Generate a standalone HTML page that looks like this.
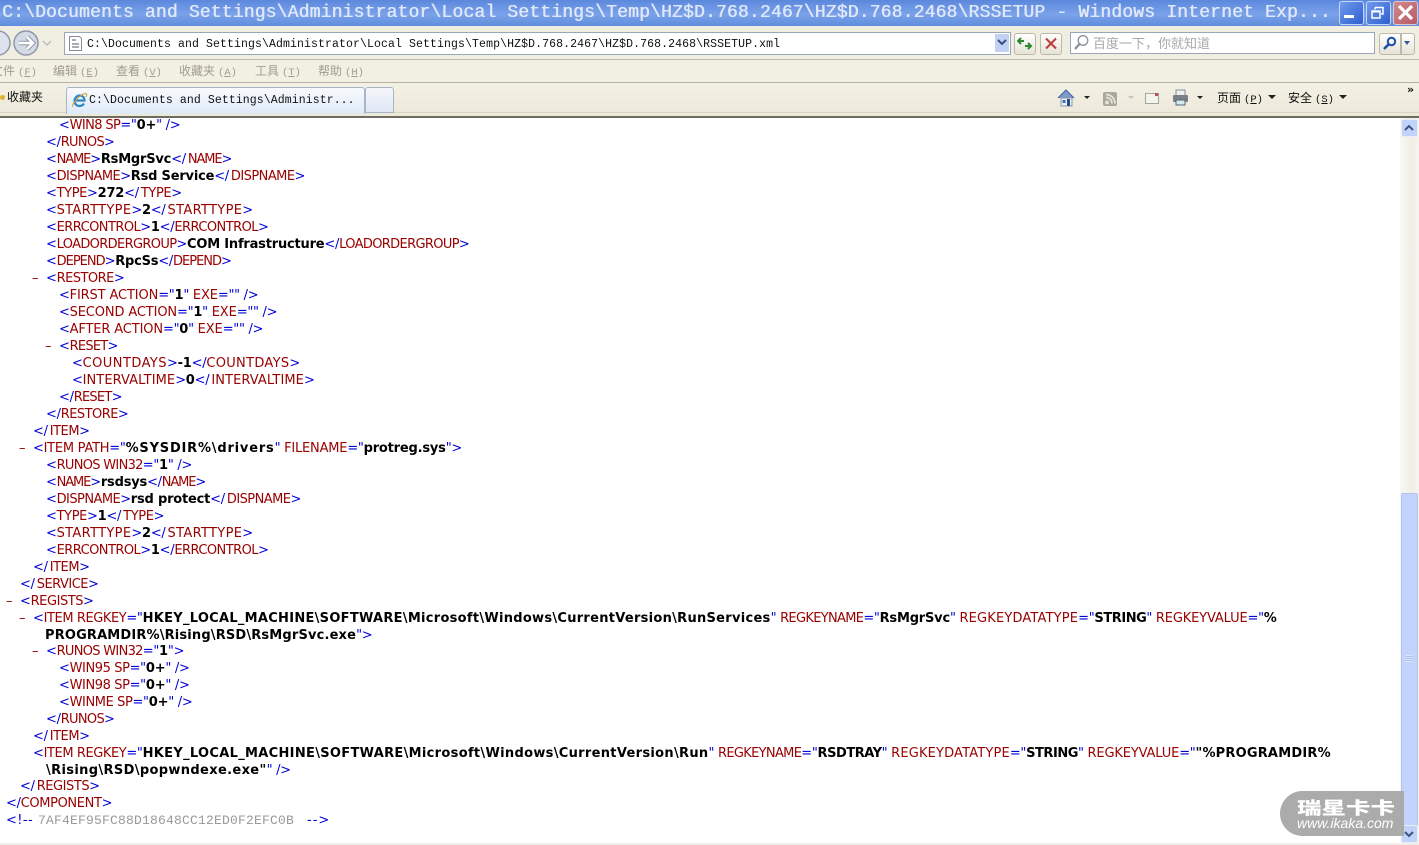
<!DOCTYPE html>
<html><head><meta charset="utf-8"><style>
html,body{margin:0;padding:0;width:1419px;height:845px;overflow:hidden;background:#fff}
.a{position:absolute}
#x{position:absolute;left:0;top:2px}
#x div{position:absolute;white-space:pre;font:13px/16px "DejaVu Sans",sans-serif;color:#0000d8;letter-spacing:-.3px}
#x b{color:#000;font-weight:bold;letter-spacing:-.2px}
#x b.p{letter-spacing:.8px}#x b.q{letter-spacing:.16px}#x b.r{letter-spacing:.35px}#x b.h{letter-spacing:.28px}#x b.h2{letter-spacing:.31px}#x b.g{letter-spacing:.2px}#x b.s{letter-spacing:-.45px}
#x em,#x i{font-style:normal;color:#990000;letter-spacing:-.5px}
#x i{margin-left:2px}
#x .st{letter-spacing:.33px}#x .ty{letter-spacing:-.38px}#x .na{letter-spacing:-1.1px}#x .di{letter-spacing:-.55px}#x .er{letter-spacing:-.55px}#x .lo{letter-spacing:-.65px}#x .de{letter-spacing:-1px}#x .re{letter-spacing:-.53px}#x .ru{letter-spacing:-.68px}#x .co{letter-spacing:.45px}#x .co2{letter-spacing:.3px}#x .in{letter-spacing:.08px}#x .rs{letter-spacing:-.75px}#x .it{letter-spacing:-.45px}#x .se{letter-spacing:-.5px}#x .rg{letter-spacing:-.45px}#x .cm{letter-spacing:-.37px}
#x .wi{letter-spacing:-.4px}#x .w8{letter-spacing:-.6px}#x .ac{letter-spacing:-.13px}#x .ex{letter-spacing:-.1px}#x .rw{letter-spacing:-.7px}#x .ip{letter-spacing:-.25px}#x .fn{letter-spacing:-.2px}#x .ir{letter-spacing:-.42px}#x .kn{letter-spacing:-.68px}#x .kd{letter-spacing:.16px}#x .kv{letter-spacing:-.15px}
.m{font:12px/14px "Noto Sans CJK SC",monospace;color:#a09d90;white-space:pre}
.m span,.k span{font:10.500px/14px "Liberation Mono",monospace;margin-left:3px}
.k{font:12px/15px "Noto Sans CJK SC",monospace;color:#111;white-space:pre}
.c{font-family:"Liberation Mono","Noto Sans CJK SC",monospace;white-space:pre}
</style></head><body>
<div class="a" style="left:0;top:0;width:1419px;height:26px;background:linear-gradient(#5c88dc,#7ba2ea 55%,#5f8ddc)"></div>
<div class="a c" style="left:2px;top:2px;font-size:18px;line-height:22px;letter-spacing:.18px;color:#dfe8f8;text-shadow:.5px 0 0 #dfe8f8">C:\Documents and Settings\Administrator\Local Settings\Temp\HZ$D.768.2467\HZ$D.768.2468\RSSETUP - Windows Internet Exp...</div>
<div class="a" style="left:1339px;top:1px;width:23px;height:22px;border-radius:3px;background:linear-gradient(135deg,#6f9aec,#2f5fd0);border:1px solid #c6d6f4"></div>
<div class="a" style="left:1344px;top:15px;width:10px;height:3px;background:#fff"></div>
<div class="a" style="left:1366px;top:1px;width:23px;height:22px;border-radius:3px;background:linear-gradient(135deg,#6f9aec,#2f5fd0);border:1px solid #c6d6f4"></div>
<svg class="a" style="left:1370px;top:4px" width="16" height="16" fill="none" stroke="#fff" stroke-width="1.5"><path d="M5 3.500h8v2M5 3.500v2M13 3v7h-2"/><rect x="2" y="7" width="8" height="7"/><path d="M2 7.500h8" stroke-width="2"/></svg>
<div class="a" style="left:1393px;top:1px;width:23px;height:22px;border-radius:3px;background:linear-gradient(135deg,#d08a8a,#b85a68);border:1px solid #dbc8d0"></div>
<svg class="a" style="left:1397px;top:4px" width="17" height="17" stroke="#fff" stroke-width="3.200"><path d="M2 2L15 15M15 2L2 15"/></svg>

<div class="a" style="left:0;top:26px;width:1419px;height:33px;background:#f0eee0"></div>
<div class="a" style="left:0;top:59px;width:1419px;height:1px;background:#bdbaa8"></div>
<div class="a" style="left:0;top:60px;width:1419px;height:22px;background:#f2f0e3"></div>
<div class="a" style="left:0;top:82px;width:1419px;height:1px;background:#b4b1a0"></div>
<div class="a" style="left:0;top:83px;width:1419px;height:33px;background:linear-gradient(#f3f1e5,#ece9d9)"></div>
<div class="a" style="left:0;top:112px;width:1419px;height:1px;background:#d8d5c5"></div>
<div class="a" style="left:0;top:116px;width:1419px;height:2px;background:#6e6c62"></div>

<svg class="a" style="left:-14px;top:28px" width="70" height="30"><circle cx="12" cy="15" r="12" fill="#dde3ee" stroke="#8f98aa" stroke-width="1.500"/><circle cx="40" cy="15" r="12" fill="#d4dae6" stroke="#8f98aa" stroke-width="1.500"/><path d="M33 15h13M41 9l6 6-6 6" fill="none" stroke="#8f98aa" stroke-width="4.500"/><path d="M33 15h13M41 9l6 6-6 6" fill="none" stroke="#fff" stroke-width="2.500"/><path d="M57 13l4 4 4-4" fill="none" stroke="#aab"/></svg>
<div class="a" style="left:64px;top:32px;width:945px;height:21px;background:#fff;border:1px solid #9aa7b8"></div>
<svg class="a" style="left:68px;top:36px" width="15" height="15"><path d="M1.500 .5h10l2 2v12h-12z" fill="#fff" stroke="#889"/><path d="M4 4h4M4 8h7M4 11h7" stroke="#556"/></svg>
<div class="a c" style="left:87px;top:37px;font-size:11.500px;line-height:15px;color:#111;letter-spacing:.1px">C:\Documents and Settings\Administrator\Local Settings\Temp\HZ$D.768.2467\HZ$D.768.2468\RSSETUP.xml</div>
<div class="a" style="left:995px;top:34px;width:14px;height:18px;background:#c3d2f4"></div>
<svg class="a" style="left:997px;top:39px" width="11" height="9" fill="none" stroke="#3a4f80" stroke-width="2"><path d="M1 1l4 4 4-4"/></svg>
<div class="a" style="left:1014px;top:33px;width:20px;height:20px;border:1px solid #bbb9a8;border-radius:3px;background:linear-gradient(#fff,#e5e3d6)"></div>
<svg class="a" style="left:1017px;top:36px" width="16" height="15" fill="none" stroke="#2b8a2b" stroke-width="2"><path d="M1 5h6M4 2L1 5l3 3M14 10H8M11 7l3 3-3 3"/></svg>
<div class="a" style="left:1040px;top:33px;width:20px;height:20px;border:1px solid #bbb9a8;border-radius:3px;background:linear-gradient(#fff,#e5e3d6)"></div>
<svg class="a" style="left:1044px;top:37px" width="14" height="13" stroke="#c43a3a" stroke-width="2"><path d="M2 1.500L12 11.500M12 1.500L2 11.500"/></svg>
<div class="a" style="left:1070px;top:32px;width:303px;height:20px;background:#fff;border:1px solid #9aa7b8"></div>
<svg class="a" style="left:1073px;top:34px" width="16" height="17" fill="none" stroke="#8a8f99" stroke-width="1.300"><circle cx="10" cy="6.500" r="4.800"/><path d="M6.500 10L2 15" stroke-width="2.200"/></svg>
<div class="a" style="left:1093px;top:35px;font:13px/16px 'Noto Sans CJK SC',sans-serif;color:#a8a8a8;white-space:pre">百度一下，你就知道</div>
<div class="a" style="left:1379px;top:33px;width:20px;height:20px;border:1px solid #bbb9a8;border-radius:3px 0 0 3px;background:linear-gradient(#fff,#e5e3d6)"></div>
<svg class="a" style="left:1382px;top:36px" width="16" height="15" fill="none" stroke="#1d4ea8" stroke-width="2"><circle cx="9.500" cy="5.500" r="3.700"/><path d="M6.500 8.500L2 13" stroke-width="2.600"/></svg>
<div class="a" style="left:1401px;top:33px;width:12px;height:20px;border:1px solid #bbb9a8;border-radius:0 3px 3px 0;background:linear-gradient(#fff,#e5e3d6)"></div>
<div class="a" style="left:1404px;top:41px;border:3px solid transparent;border-top:4px solid #3a5a90"></div>

<div class="a m" style="left:-9px;top:64px">文件<span>(<u>F</u>)</span></div>
<div class="a m" style="left:53px;top:64px">编辑<span>(<u>E</u>)</span></div>
<div class="a m" style="left:116px;top:64px">查看<span>(<u>V</u>)</span></div>
<div class="a m" style="left:179px;top:64px">收藏夹<span>(<u>A</u>)</span></div>
<div class="a m" style="left:255px;top:64px">工具<span>(<u>T</u>)</span></div>
<div class="a m" style="left:318px;top:64px">帮助<span>(<u>H</u>)</span></div>

<div class="a" style="left:0;top:95px;width:5px;height:5px;background:#e0b030;border-radius:50%"></div>
<div class="a" style="left:7px;top:89px;font:12px/16px 'Noto Sans CJK SC',sans-serif;color:#111">收藏夹</div>
<div class="a" style="left:66px;top:87px;width:297px;height:26px;border:1px solid #a9b4c6;border-bottom:0;border-radius:3px 3px 0 0;background:linear-gradient(#f8fafd,#dfeaf8)"></div>
<svg class="a" style="left:71px;top:92px" width="17" height="17" fill="none"><path d="M4 8.500h9.500C13.500 5 11 3.500 8.500 3.500S3.500 6 3.500 9s2.200 5 5 5c2 0 3.500-1 4.500-2.500" stroke="#2d86c9" stroke-width="2.200"/><path d="M1.500 15C1 12 8 3 14 1.500c2-.3 2 1.500 1 3.500" stroke="#d9a030" stroke-width="1.100"/></svg>
<div class="a c" style="left:89px;top:93px;font-size:11.500px;line-height:15px;color:#111;letter-spacing:.09px">C:\Documents and Settings\Administr...</div>
<div class="a" style="left:365px;top:87px;width:27px;height:24px;border:1px solid #a9b4c6;border-radius:3px 3px 0 0;background:linear-gradient(#f4f6fb,#dfe8f5)"></div>

<svg class="a" style="left:1057px;top:88px" width="20" height="20"><path d="M1 10L9 2l8 8" fill="#7f9bc9" stroke="#3c5fa0"/><rect x="4" y="10" width="11" height="8" fill="#eef0f0" stroke="#8a96a8"/><rect x="10" y="11" width="3" height="7" fill="#1d4e94"/><rect x="5.500" y="12" width="3" height="3" fill="#3a6cb0"/></svg>
<div class="a" style="left:1084px;top:96px;border:3px solid transparent;border-top:3px solid #222"></div>
<div class="a" style="left:1103px;top:92px;width:14px;height:14px;border-radius:2px;background:#a9a89d"></div>
<svg class="a" style="left:1103px;top:92px" width="14" height="14" fill="none" stroke="#e6e5dc" stroke-width="1.800"><path d="M3 5.500a6 6 0 0 1 6 6M3 2.500a9 9 0 0 1 9 9"/><circle cx="4" cy="10.500" r="1" fill="#e6e5dc"/></svg>
<div class="a" style="left:1128px;top:96px;border:3px solid transparent;border-top:3px solid #c8c6b8"></div>
<div class="a" style="left:1145px;top:93px;width:12px;height:9px;background:#f4f4ef;border:1px solid #a5a59c"></div>
<div class="a" style="left:1155px;top:93px;width:3px;height:3px;background:#c05050"></div>
<svg class="a" style="left:1172px;top:89px" width="17" height="18"><rect x="4" y="1" width="9" height="6" fill="#eee" stroke="#889"/><rect x="1" y="6" width="15" height="7" rx="1" fill="#7a8088"/><rect x="4" y="11" width="9" height="5" fill="#d5e8ee" stroke="#567"/></svg>
<div class="a" style="left:1197px;top:96px;border:3px solid transparent;border-top:3px solid #222"></div>
<div class="a k" style="left:1217px;top:90px">页面<span>(<u>P</u>)</span></div>
<div class="a" style="left:1268px;top:95px;border:4px solid transparent;border-top:4px solid #222"></div>
<div class="a k" style="left:1288px;top:90px">安全<span>(<u>S</u>)</span></div>
<div class="a" style="left:1339px;top:95px;border:4px solid transparent;border-top:4px solid #222"></div>
<div class="a" style="left:1407px;top:83px;font:bold 11px/14px 'DejaVu Sans',sans-serif;color:#111">»</div>

<div id="x">
<div style="left:59px;top:116px">&lt;<em class="w8">WIN8 SP</em>="<b>0+</b>" /&gt;</div>
<div style="left:46px;top:133px">&lt;/<em class="ru">RUNOS</em>&gt;</div>
<div style="left:46px;top:150px">&lt;<em class="na">NAME</em>&gt;<b>RsMgrSvc</b>&lt;/<i class="na">NAME</i>&gt;</div>
<div style="left:46px;top:167px">&lt;<em class="di">DISPNAME</em>&gt;<b>Rsd Service</b>&lt;/<i class="di">DISPNAME</i>&gt;</div>
<div style="left:46px;top:184px">&lt;<em class="ty">TYPE</em>&gt;<b>272</b>&lt;/<i class="ty">TYPE</i>&gt;</div>
<div style="left:46px;top:201px">&lt;<em class="st">STARTTYPE</em>&gt;<b>2</b>&lt;/<i class="st">STARTTYPE</i>&gt;</div>
<div style="left:46px;top:218px">&lt;<em class="er">ERRCONTROL</em>&gt;<b>1</b>&lt;/<em class="er">ERRCONTROL</em>&gt;</div>
<div style="left:46px;top:235px">&lt;<em class="lo">LOADORDERGROUP</em>&gt;<b>COM Infrastructure</b>&lt;/<em class="lo">LOADORDERGROUP</em>&gt;</div>
<div style="left:46px;top:252px">&lt;<em class="de">DEPEND</em>&gt;<b>RpcSs</b>&lt;/<em class="de">DEPEND</em>&gt;</div>
<div style="left:32px;top:269px"><em>–</em></div><div style="left:46px;top:269px">&lt;<em class="re">RESTORE</em>&gt;</div>
<div style="left:59px;top:286px">&lt;<em class="ac">FIRST ACTION</em>="<b>1</b>" <em class="ex">EXE</em>="" /&gt;</div>
<div style="left:59px;top:303px">&lt;<em class="ac">SECOND ACTION</em>="<b>1</b>" <em class="ex">EXE</em>="" /&gt;</div>
<div style="left:59px;top:320px">&lt;<em class="ac">AFTER ACTION</em>="<b>0</b>" <em class="ex">EXE</em>="" /&gt;</div>
<div style="left:45px;top:337px"><em>–</em></div><div style="left:59px;top:337px">&lt;<em class="rs">RESET</em>&gt;</div>
<div style="left:72px;top:354px">&lt;<em class="co">COUNTDAYS</em>&gt;<b>-1</b>&lt;/<em class="co2">COUNTDAYS</em>&gt;</div>
<div style="left:72px;top:371px">&lt;<em class="in">INTERVALTIME</em>&gt;<b>0</b>&lt;/<i class="in">INTERVALTIME</i>&gt;</div>
<div style="left:59px;top:388px">&lt;/<em class="rs">RESET</em>&gt;</div>
<div style="left:46px;top:405px">&lt;/<em class="re">RESTORE</em>&gt;</div>
<div style="left:33px;top:422px">&lt;/<i class="it">ITEM</i>&gt;</div>
<div style="left:19px;top:439px"><em>–</em></div><div style="left:33px;top:439px">&lt;<em class="ip">ITEM PATH</em>="<b class="p">%SYSDIR%\drivers</b>" <em class="fn">FILENAME</em>="<b>protreg.sys</b>"&gt;</div>
<div style="left:46px;top:456px">&lt;<em class="rw">RUNOS WIN32</em>="<b>1</b>" /&gt;</div>
<div style="left:46px;top:473px">&lt;<em class="na">NAME</em>&gt;<b>rsdsys</b>&lt;/<em class="na">NAME</em>&gt;</div>
<div style="left:46px;top:490px">&lt;<em class="di">DISPNAME</em>&gt;<b>rsd protect</b>&lt;/<i class="di">DISPNAME</i>&gt;</div>
<div style="left:46px;top:507px">&lt;<em class="ty">TYPE</em>&gt;<b>1</b>&lt;/<i class="ty">TYPE</i>&gt;</div>
<div style="left:46px;top:524px">&lt;<em class="st">STARTTYPE</em>&gt;<b>2</b>&lt;/<i class="st">STARTTYPE</i>&gt;</div>
<div style="left:46px;top:541px">&lt;<em class="er">ERRCONTROL</em>&gt;<b>1</b>&lt;/<em class="er">ERRCONTROL</em>&gt;</div>
<div style="left:33px;top:558px">&lt;/<i class="it">ITEM</i>&gt;</div>
<div style="left:20px;top:575px">&lt;/<i class="se">SERVICE</i>&gt;</div>
<div style="left:6px;top:592px"><em>–</em></div><div style="left:20px;top:592px">&lt;<em class="rg">REGISTS</em>&gt;</div>
<div style="left:19px;top:609px"><em>–</em></div><div style="left:33px;top:609px">&lt;<em class="ir">ITEM REGKEY</em>="<b class="h">HKEY_LOCAL_MACHINE\SOFTWARE\Microsoft\Windows\CurrentVersion\RunServices</b>" <em class="kn">REGKEYNAME</em>="<b>RsMgrSvc</b>" <em class="kd">REGKEYDATATYPE</em>="<b class="s">STRING</b>" <em class="kv">REGKEYVALUE</em>="<b>%</b></div>
<div style="left:45px;top:626px"><b class="q">PROGRAMDIR%\Rising\RSD\RsMgrSvc.exe</b>"&gt;</div>
<div style="left:32px;top:642px"><em>–</em></div><div style="left:46px;top:642px">&lt;<em class="rw">RUNOS WIN32</em>="<b>1</b>"&gt;</div>
<div style="left:59px;top:659px">&lt;<em class="wi">WIN95 SP</em>="<b>0+</b>" /&gt;</div>
<div style="left:59px;top:676px">&lt;<em class="wi">WIN98 SP</em>="<b>0+</b>" /&gt;</div>
<div style="left:59px;top:693px">&lt;<em class="wi">WINME SP</em>="<b>0+</b>" /&gt;</div>
<div style="left:46px;top:710px">&lt;/<em class="ru">RUNOS</em>&gt;</div>
<div style="left:33px;top:727px">&lt;/<i class="it">ITEM</i>&gt;</div>
<div style="left:33px;top:744px">&lt;<em class="ir">ITEM REGKEY</em>="<b class="h2">HKEY_LOCAL_MACHINE\SOFTWARE\Microsoft\Windows\CurrentVersion\Run</b>" <em class="kn">REGKEYNAME</em>="<b class="s">RSDTRAY</b>" <em class="kd">REGKEYDATATYPE</em>="<b class="s">STRING</b>" <em class="kv">REGKEYVALUE</em>="<b class="g">"%PROGRAMDIR%</b></div>
<div style="left:46px;top:761px"><b class="r">\Rising\RSD\popwndexe.exe"</b>" /&gt;</div>
<div style="left:20px;top:777px">&lt;/<i class="rg">REGISTS</i>&gt;</div>
<div style="left:6px;top:794px">&lt;/<em class="cm">COMPONENT</em>&gt;</div>
<div style="left:6px;top:811px;letter-spacing:.4px">&lt;!--</div>
<div style="left:38px;top:811px;font:13px/16px 'Liberation Mono',monospace;color:#999;letter-spacing:.2px">7AF4EF95FC88D18648CC12ED0F2EFC0B</div>
<div style="left:307px;top:811px;letter-spacing:1px">--&gt;</div>
</div>

<div class="a" style="left:1400px;top:118px;width:19px;height:725px;background:linear-gradient(90deg,#faf9f5,#efede4 60%,#f6f5f0)"></div>
<div class="a" style="left:1401px;top:493px;width:15px;height:332px;background:#c2d4fb;border:1px solid #b0c4ee;border-radius:2px"></div>
<div class="a" style="left:1406px;top:655px;width:6px;height:7px;background:repeating-linear-gradient(#dde7fd 0 1px,#a9bfe8 1px 2px)"></div>
<div class="a" style="left:1401px;top:119px;width:15px;height:16px;background:#c2d3fa;border:1px solid #e8eefb;border-radius:2px"></div>
<svg class="a" style="left:1403px;top:123px" width="12" height="9" fill="none" stroke="#3d5480" stroke-width="2"><path d="M2 7l4-4 4 4"/></svg>
<div class="a" style="left:1401px;top:825px;width:15px;height:16px;background:#c2d3fa;border:1px solid #e8eefb;border-radius:2px"></div>
<svg class="a" style="left:1403px;top:830px" width="12" height="9" fill="none" stroke="#3d5480" stroke-width="2"><path d="M2 2l4 4 4-4"/></svg>
<div class="a" style="left:0;top:843px;width:1419px;height:2px;background:#eeede8"></div>

<div class="a" style="left:1280px;top:791px;width:124px;height:45px;background:#a8a8a8;border-radius:23px 0 0 23px;opacity:.96"></div>
<div class="a" style="left:1297px;top:797px;font:900 17px/20px 'Noto Sans CJK SC',sans-serif;color:#fff;letter-spacing:0;white-space:pre;transform:scaleX(1.44);transform-origin:0 0">瑞星卡卡</div>
<div class="a" style="left:1297px;top:815px;font:italic 14px/16px 'Liberation Sans',sans-serif;color:#fff;white-space:pre">www.ikaka.com</div>
</body></html>
